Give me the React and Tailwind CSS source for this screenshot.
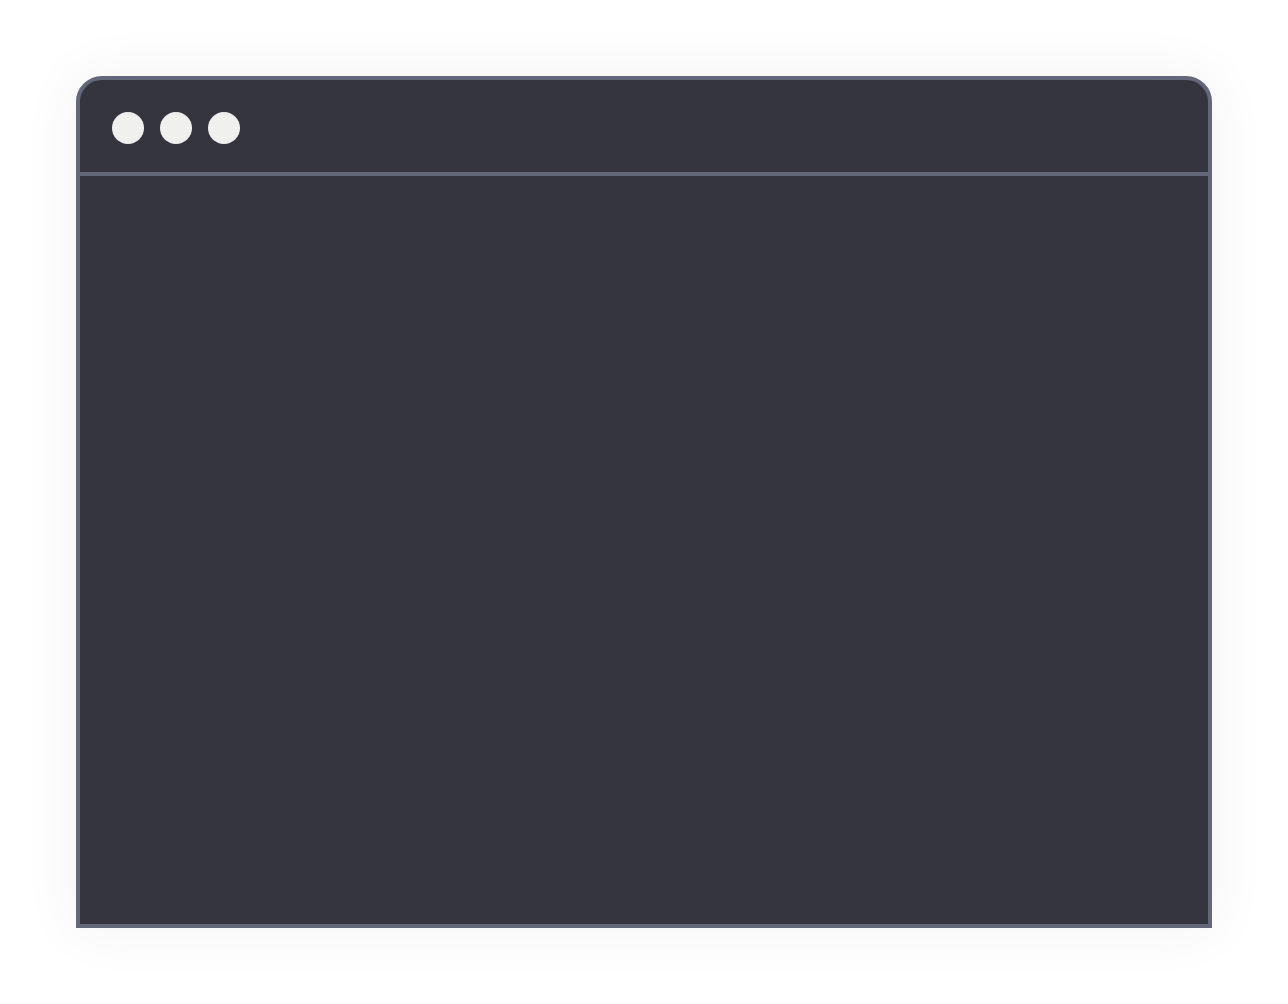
const Dot = () => <span className="block w-8 h-8 rounded-full bg-[#f0f0ee]" />;

const App = () => {
  return (
    <div className="min-h-screen bg-white p-[76px]">
      <div className="flex flex-col h-[852px] bg-[#35353f] border-4 border-[#646778] rounded-t-[26px] shadow-[0_0_60px_rgba(0,0,0,0.06)]">
        {/* Title bar */}
        <div className="flex items-start gap-4 h-[96px] px-8 pt-8 border-b-4 border-[#646778]">
          <Dot />
          <Dot />
          <Dot />
        </div>
        {/* Body */}
        <div className="flex-1" />
      </div>
    </div>
  );
};

export default App;
